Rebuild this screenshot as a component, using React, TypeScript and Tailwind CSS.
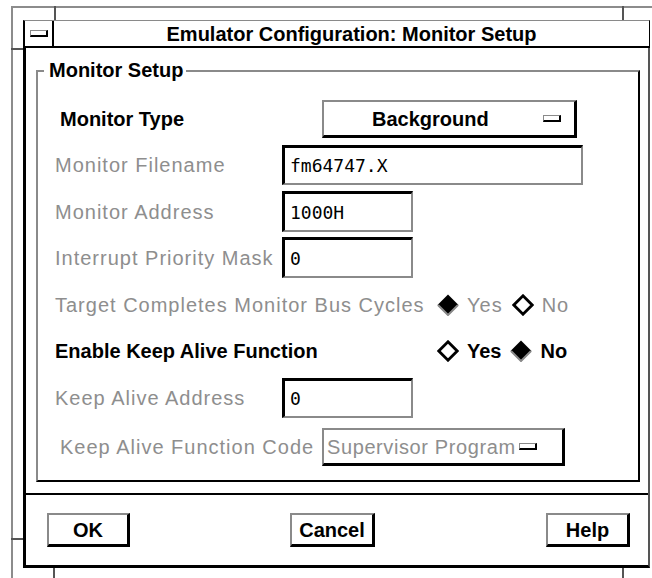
const GRAY_TEXT = "text-[#8e8e8e] tracking-[1px] font-normal";

function OptionMark() {
  return (
    <span className="block w-[18px] h-[7px] bg-white border-t border-l border-[#8a8a8a] border-b-2 border-r-2 border-b-black border-r-black" />
  );
}

function Diamond({ filled }: { filled: boolean }) {
  return (
    <svg width="22" height="22" viewBox="0 0 22 22" className="shrink-0">
      {filled ? (
        <>
          <polygon points="11,0.5 21.5,11 11,21.5 0.5,11" fill="#000" />
          <polyline points="21,11 11,21 1,11" fill="none" stroke="#8a8a8a" strokeWidth="2" />
        </>
      ) : (
        <polygon points="11,1.8 20.2,11 11,20.2 1.8,11" fill="#fff" stroke="#000" strokeWidth="2.8" />
      )}
    </svg>
  );
}

function Field({ value, width }: { value: string; width: string }) {
  return (
    <div
      className={`${width} h-full flex items-center pl-[5px] border-t-[3px] border-l-[3px] border-black border-b-2 border-r-2 border-b-[#8a8a8a] border-r-[#8a8a8a] font-['DejaVu_Sans_Mono','Liberation_Mono',monospace] text-[18px]`}
    >
      {value}
    </div>
  );
}

function PushButton({ label, className }: { label: string; className: string }) {
  return (
    <button
      className={`${className} h-[34px] flex items-center justify-center bg-white border-t-2 border-l-2 border-[#8a8a8a] border-b-[3px] border-r-[3px] border-b-black border-r-black text-[20px] font-bold`}
    >
      {label}
    </button>
  );
}

export default function App() {
  return (
    <div className="w-[652px] h-[578px] bg-white overflow-hidden pl-[11px] pt-[6px] font-['Liberation_Sans',Arial,sans-serif] text-black">
      <div className="relative h-[572px] border-l-2 border-t-2 border-[#8c8c8c] pl-[10px] pt-[12px]">
        {/* window manager resize handles */}
        <span className="absolute left-[41px] top-[-2px] w-[2px] h-[14px] bg-[#555]" />
        <span className="absolute left-[609px] top-[-2px] w-[2px] h-[14px] bg-[#555]" />
        <span className="absolute left-[-2px] top-[40px] w-[12px] h-[2px] bg-[#555]" />
        <span className="absolute left-[-2px] top-[530px] w-[12px] h-[2px] bg-[#555]" />
        <span className="absolute left-[40px] top-[560px] w-[2px] h-[12px] bg-[#555]" />
        <span className="absolute left-[609px] top-[560px] w-[2px] h-[12px] bg-[#555]" />

        <div className="w-[627px] flex flex-col">
          {/* title bar */}
          <div className="h-[28px] flex border-t border-[#8a8a8a] border-l-2 border-l-black border-r border-r-black border-b-2 border-b-black">
            <div className="w-[29px] flex items-center justify-center border-r-2 border-black">
              <OptionMark />
            </div>
            <div className="flex-1 flex items-center justify-center text-[20px] font-bold leading-none">
              Emulator Configuration: Monitor Setup
            </div>
          </div>

          {/* dialog body */}
          <div className="h-[520px] flex flex-col border-l-[3px] border-black border-b-[3px] border-r-2 border-r-[#555]">
            <div className="pl-[10px] pr-[8px] pt-[12px] pb-[11px]">
              {/* group header */}
              <div className="h-[20px] flex items-end">
                <div className="w-[8px] h-[10px] border-l-2 border-t-2 border-[#8a8a8a]" />
                <span className="self-center pl-[5px] pr-[3px] text-[20px] font-bold leading-[20px]">Monitor Setup</span>
                <div className="flex-1 h-[10px] border-t-2 border-[#8a8a8a] border-r-2 border-r-black" />
              </div>
              <div className="h-[402px] flex flex-col pl-[17px] border-l-2 border-[#8a8a8a] border-r-2 border-r-black border-b-2 border-b-black text-[20px]">
                <div className="mt-[20px] h-[38px] flex items-center">
                  <span className="w-[267px] pl-[5px] font-bold">Monitor Type</span>
                  <div className="w-[255px] h-full flex items-center bg-white border-t-2 border-l-2 border-[#8a8a8a] border-b-[3px] border-r-[3px] border-b-black border-r-black">
                    <span className="pl-[48px] font-bold">Background</span>
                    <span className="ml-[54px]"><OptionMark /></span>
                  </div>
                </div>

                <div className="mt-[7px] h-[40px] flex items-center">
                  <span className={`w-[227px] ${GRAY_TEXT}`}>Monitor Filename</span>
                  <Field value="fm64747.X" width="w-[301px]" />
                </div>

                <div className="mt-[6px] h-[41px] flex items-center">
                  <span className={`w-[227px] ${GRAY_TEXT}`}>Monitor Address</span>
                  <Field value="1000H" width="w-[131px]" />
                </div>

                <div className="mt-[5px] h-[41px] flex items-center">
                  <span className={`w-[227px] whitespace-nowrap ${GRAY_TEXT}`}>Interrupt Priority Mask</span>
                  <Field value="0" width="w-[131px]" />
                </div>

                <div className="mt-[14px] h-[26px] flex items-center">
                  <span className={`w-[382px] whitespace-nowrap ${GRAY_TEXT}`}>Target Completes Monitor Bus Cycles</span>
                  <Diamond filled />
                  <span className={`ml-[8px] ${GRAY_TEXT}`}>Yes</span>
                  <span className="ml-[9px]"><Diamond filled={false} /></span>
                  <span className={`ml-[8px] ${GRAY_TEXT}`}>No</span>
                </div>

                <div className="mt-[20px] h-[26px] flex items-center font-bold">
                  <span className="w-[382px] whitespace-nowrap">Enable Keep Alive Function</span>
                  <Diamond filled={false} />
                  <span className="ml-[8px]">Yes</span>
                  <span className="ml-[9px]"><Diamond filled /></span>
                  <span className="ml-[8px]">No</span>
                </div>

                <div className="mt-[14px] h-[40px] flex items-center">
                  <span className={`w-[227px] ${GRAY_TEXT}`}>Keep Alive Address</span>
                  <Field value="0" width="w-[131px]" />
                </div>

                <div className="mt-[10px] h-[38px] flex items-center">
                  <span className={`w-[267px] pl-[5px] whitespace-nowrap ${GRAY_TEXT}`}>Keep Alive Function Code</span>
                  <div className="w-[243px] h-full flex items-center bg-white border-t-2 border-l-2 border-[#8a8a8a] border-b-[3px] border-r-[3px] border-b-black border-r-black">
                    <span className="pl-[3px] whitespace-nowrap tracking-[0.6px] text-[#8e8e8e]">Supervisor Program</span>
                    <span className="ml-[3px]"><OptionMark /></span>
                  </div>
                </div>
              </div>
            </div>

            <div className="h-[2px] bg-black" />

            <div className="flex pt-[18px]">
              <PushButton label="OK" className="ml-[21px] w-[83px]" />
              <PushButton label="Cancel" className="ml-[160px] w-[85px]" />
              <PushButton label="Help" className="ml-[171px] w-[84px]" />
            </div>
          </div>
        </div>
      </div>
    </div>
  );
}
